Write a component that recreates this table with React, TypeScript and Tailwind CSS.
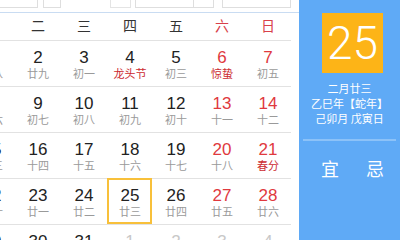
import React from "react";

type Cell = { d: string; l: string; dc?: string; lc?: string; sel?: boolean };

const BLK = "text-[#222]";
const RED = "text-[#e0393e]";
const GRY = "text-[#c8c8c8]";
const LG = "text-[#9a9a9a]";
const FEST = "text-[#cc2a30]";

const rows: Cell[][] = [
  [
    { d: "1", l: "廿八" },
    { d: "2", l: "廿九" },
    { d: "3", l: "初一" },
    { d: "4", l: "龙头节", lc: FEST },
    { d: "5", l: "初三" },
    { d: "6", l: "惊蛰", dc: RED, lc: FEST },
    { d: "7", l: "初五", dc: RED },
  ],
  [
    { d: "8", l: "初六" },
    { d: "9", l: "初七" },
    { d: "10", l: "初八" },
    { d: "11", l: "初九" },
    { d: "12", l: "初十" },
    { d: "13", l: "十一", dc: RED },
    { d: "14", l: "十二", dc: RED },
  ],
  [
    { d: "15", l: "十三" },
    { d: "16", l: "十四" },
    { d: "17", l: "十五" },
    { d: "18", l: "十六" },
    { d: "19", l: "十七" },
    { d: "20", l: "十八", dc: RED },
    { d: "21", l: "春分", dc: RED, lc: FEST },
  ],
  [
    { d: "22", l: "二十" },
    { d: "23", l: "廿一" },
    { d: "24", l: "廿二" },
    { d: "25", l: "廿三", sel: true },
    { d: "26", l: "廿四" },
    { d: "27", l: "廿五", dc: RED },
    { d: "28", l: "廿六", dc: RED },
  ],
  [
    { d: "29", l: "廿七" },
    { d: "30", l: "廿八" },
    { d: "31", l: "廿九" },
    { d: "1", l: "三月", dc: GRY, lc: "text-[#d8d8d8]" },
    { d: "2", l: "初二", dc: GRY, lc: "text-[#d8d8d8]" },
    { d: "3", l: "初三", dc: GRY, lc: "text-[#d8d8d8]" },
    { d: "4", l: "清明", dc: GRY, lc: "text-[#d8d8d8]" },
  ],
];

const heads = ["一", "二", "三", "四", "五", "六", "日"];

export default function App() {
  const font = { fontFamily: '"Liberation Sans", Arial, "Noto Sans CJK SC", sans-serif' };
  return (
    <div className="w-[400px] h-[240px] overflow-hidden bg-white flex" style={font}>
      <div className="w-[299px] h-full overflow-hidden flex flex-col">
        {/* top strip: bottoms of dropdowns */}
        <div className="h-[13px] shrink-0 border-b border-[#c9dcf2] flex">
          <div className="w-[38px] h-[8px] border-r border-b border-[#dedede]" />
          <div className="ml-[5px] w-[18px] h-[8px] border-x border-b border-[#dedede]" />
          <div className="ml-[49px] w-[21px] h-[8px] border-x border-b border-[#e4e4e4]" />
          <div className="ml-[4px] w-[59px] h-[8px] border-x border-b border-[#dedede]" />
          <div className="w-[20px] h-[8px] border-r border-b border-[#dedede]" />
          <div className="ml-[8px] w-[69px] h-[8px] border-x border-b border-[#dedede]" />
        </div>
        <div className="ml-[-31px] w-[322px]">
          <div className="grid grid-cols-7 h-[28px] border-b border-[#e2e2e2]">
            {heads.map((h, i) => (
              <div
                key={h}
                className={`flex items-center justify-center pb-[3px] text-[14px] ${i >= 5 ? "text-[#d8404a]" : "text-[#333]"}`}
                style={{ fontFamily: '"Noto Sans CJK SC", sans-serif' }}
              >
                {h}
              </div>
            ))}
          </div>
          {rows.map((r, ri) => (
            <div key={ri} className="grid grid-cols-7 h-[46px] border-b border-[#e2e2e2]">
              {r.map((c, ci) => (
                <div key={ci} className="relative flex flex-col items-center pt-[8px]">
                  {c.sel && (
                    <div className="absolute top-[-1px] left-0 right-[1px] bottom-[0px] border-2 border-[#f8c03a]" />
                  )}
                  <div className={`text-[17px] leading-[18px] ${c.dc ?? BLK}`}>{c.d}</div>
                  <div
                    className={`mt-[-1px] text-[11px] leading-[14px] ${c.lc ?? LG}`}
                    style={{ fontFamily: '"Noto Sans CJK SC", sans-serif' }}
                  >
                    {c.l}
                  </div>
                </div>
              ))}
            </div>
          ))}
        </div>
      </div>
      <div
        className="flex-1 h-full bg-[#5faaf6] flex flex-col text-white"
        style={{ fontFamily: '"Noto Sans CJK SC", sans-serif' }}
      >
        <div className="mt-[13px] ml-[23px] w-[61px] h-[60px] bg-[#fdb417] flex items-center justify-center">
          <span className="text-[46px] leading-none font-light" style={{ fontFamily: "Roboto, sans-serif" }}>
            25
          </span>
        </div>
        <div className="mt-[8px] flex flex-col items-center text-[11px] leading-[15px]">
          <div>二月廿三</div>
          <div>乙巳年【蛇年】</div>
          <div>己卯月 戊寅日</div>
        </div>
        <div className="mt-[13px] mx-[4px] h-[2px] bg-[#8cc2f8]" />
        <div className="mt-[16px] pl-[6px] flex justify-center gap-[27px] text-[18px] leading-[22px]">
          <span>宜</span>
          <span>忌</span>
        </div>
      </div>
    </div>
  );
}
